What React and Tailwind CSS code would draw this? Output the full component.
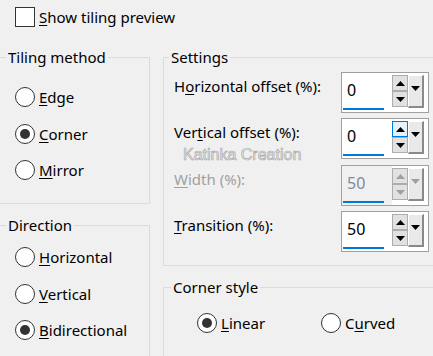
import { useState } from 'react'

const FONT = { fontFamily: '"Noto Sans", "Open Sans", sans-serif' }

// Mnemonic label: underline one letter like a Win32 dialog
function Mnemonic({ text, at }) {
  return (
    <>
      {text.slice(0, at)}
      <span className="underline underline-offset-[2px] decoration-[1px]">{text[at]}</span>
      {text.slice(at + 1)}
    </>
  )
}

function Radio({ checked, text, at, onClick }) {
  return (
    <button onClick={onClick} className="flex items-center h-[20px] text-left">
      <span className="w-[20px] h-[20px] rounded-full border border-[#333] bg-white flex items-center justify-center shrink-0">
        {checked && <span className="w-[10px] h-[10px] rounded-full bg-[#333]" />}
      </span>
      <span className="ml-[4px] leading-[20px]">
        <Mnemonic text={text} at={at} />
      </span>
    </button>
  )
}

function Arrow({ dir, color }) {
  return (
    <svg width="9" height="5" viewBox="0 0 9 5">
      {dir === 'up'
        ? <path d="M0 5 L4.5 0 L9 5 Z" fill={color} />
        : <path d="M0 0 L9 0 L4.5 5 Z" fill={color} />}
    </svg>
  )
}

function SpinBox({ value, disabled, hoverUp }) {
  const arrow = disabled ? '#a0a0a0' : '#000'
  return (
    <div className="w-[88px] h-[41px] shrink-0 border border-[#a0a0a0] bg-white flex">
      <div className={`w-[50px] h-full flex flex-col ${disabled ? 'bg-[#f0f0f0]' : 'bg-white'}`}>
        <div className={`flex-1 pl-[5px] pt-[7px] leading-[20px] text-[16px] ${disabled ? 'text-[#7f8a99]' : 'text-black'}`}>
          {value}
        </div>
        <div className="ml-[1px] mb-[2px] w-[41px] h-[2px] bg-[#0078d7]" />
      </div>
      <div className="w-[16px] mt-[2px] flex flex-col">
        <div className={`h-[16px] border flex items-center justify-center ${hoverUp ? 'bg-[#e5f1fb] border-[#0078d7]' : 'bg-[#e1e1e1] border-[#adadad]'}`}>
          <Arrow dir="up" color={arrow} />
        </div>
        <div className="h-[16px] border border-[#adadad] bg-[#e1e1e1] flex items-center justify-center">
          <Arrow dir="down" color={arrow} />
        </div>
      </div>
      <div className="w-[16px] h-[33px] mt-[2px] bg-[#e9e9e9] border-t border-l border-t-white border-l-white border-r-2 border-b-2 border-r-[#8a8a8a] border-b-[#8a8a8a] flex justify-center pt-[10px]">
        <Arrow dir="down" color={arrow} />
      </div>
    </div>
  )
}

function SettingRow({ label, at, value, disabled, hoverUp, className }) {
  return (
    <div className={`flex ${className}`}>
      <div className={`w-[167px] shrink-0 pt-[4px] leading-[20px] ${disabled ? 'text-[#a0a0a0]' : 'text-black'}`}>
        <Mnemonic text={label} at={at} />
      </div>
      <SpinBox value={value} disabled={disabled} hoverUp={hoverUp} />
    </div>
  )
}

export default function App() {
  const [method, setMethod] = useState('corner')
  const [direction, setDirection] = useState('bi')
  const [corner, setCorner] = useState('linear')
  const [preview, setPreview] = useState(false)

  return (
    <div style={FONT} className="relative w-[433px] h-[356px] overflow-hidden bg-[#f0f0f0] text-[15px] text-black">
      {/* Preview checkbox */}
      <div className="h-[47px] pt-[7px] pl-[15px]">
        <button onClick={() => setPreview(!preview)} className="flex items-center h-[20px]">
          <span className="w-[20px] h-[20px] border border-[#333] bg-white flex items-center justify-center">
            {preview && (
              <svg width="12" height="10" viewBox="0 0 12 10">
                <path d="M1 5 L4.5 8.5 L11 1" stroke="#333" strokeWidth="1.6" fill="none" />
              </svg>
            )}
          </span>
          <span className="ml-[4px] leading-[20px]">
            <Mnemonic text="Show tiling preview" at={0} />
          </span>
        </button>
      </div>

      <div className="flex">
        {/* Left column */}
        <div className="ml-[-2px] w-[152px] shrink-0 flex flex-col">
          <fieldset className="h-[157px] border border-[#dcdcdc]">
            <legend className="ml-[7px] px-[2px] leading-[20px]">Tiling method</legend>
            <div className="mt-[20px] pl-[16px] flex flex-col gap-[16.5px]">
              <Radio checked={method === 'edge'} text="Edge" at={0} onClick={() => setMethod('edge')} />
              <Radio checked={method === 'corner'} text="Corner" at={0} onClick={() => setMethod('corner')} />
              <Radio checked={method === 'mirror'} text="Mirror" at={0} onClick={() => setMethod('mirror')} />
            </div>
          </fieldset>

          <fieldset className="mt-[11px] h-[160px] border border-[#dcdcdc]">
            <legend className="ml-[7px] px-[2px] leading-[20px]">Direction</legend>
            <div className="mt-[12px] pl-[16px] flex flex-col gap-[16.5px]">
              <Radio checked={direction === 'h'} text="Horizontal" at={0} onClick={() => setDirection('h')} />
              <Radio checked={direction === 'v'} text="Vertical" at={0} onClick={() => setDirection('v')} />
              <Radio checked={direction === 'bi'} text="Bidirectional" at={0} onClick={() => setDirection('bi')} />
            </div>
          </fieldset>
        </div>

        {/* Right column */}
        <div className="ml-[13px] w-[280px] shrink-0 flex flex-col">
          <fieldset className="h-[219px] border border-[#dcdcdc]">
            <legend className="ml-[5px] px-[2px] leading-[20px]">Settings</legend>
            <div className="pl-[10px] pt-[5px]">
              <SettingRow label="Horizontal offset (%):" at={1} value="0" />
              <SettingRow label="Vertical offset (%):" at={3} value="0" hoverUp className="mt-[5px]" />
              <SettingRow label="Width (%):" at={0} value="50" disabled className="mt-[6px]" />
              <SettingRow label="Transition (%):" at={0} value="50" className="mt-[5px]" />
            </div>
          </fieldset>

          <fieldset className="mt-[11px] h-[120px] border border-[#dcdcdc]">
            <legend className="ml-[7px] px-[2px] leading-[20px]">Corner style</legend>
            <div className="mt-[16px] pl-[33px] flex">
              <div className="w-[124px]">
                <Radio checked={corner === 'linear'} text="Linear" at={0} onClick={() => setCorner('linear')} />
              </div>
              <Radio checked={corner === 'curved'} text="Curved" at={1} onClick={() => setCorner('curved')} />
            </div>
          </fieldset>
        </div>
      </div>

      {/* Watermark over the settings group */}
      <div
        style={{ fontFamily: '"Liberation Sans", Arial, sans-serif' }}
        className="absolute left-[183px] top-[146px] text-[16px] leading-[18px] text-[#f3f3f3] [-webkit-text-stroke:0.7px_#a8a8a8] pointer-events-none"
      >
        Katinka Creation
      </div>
    </div>
  )
}
